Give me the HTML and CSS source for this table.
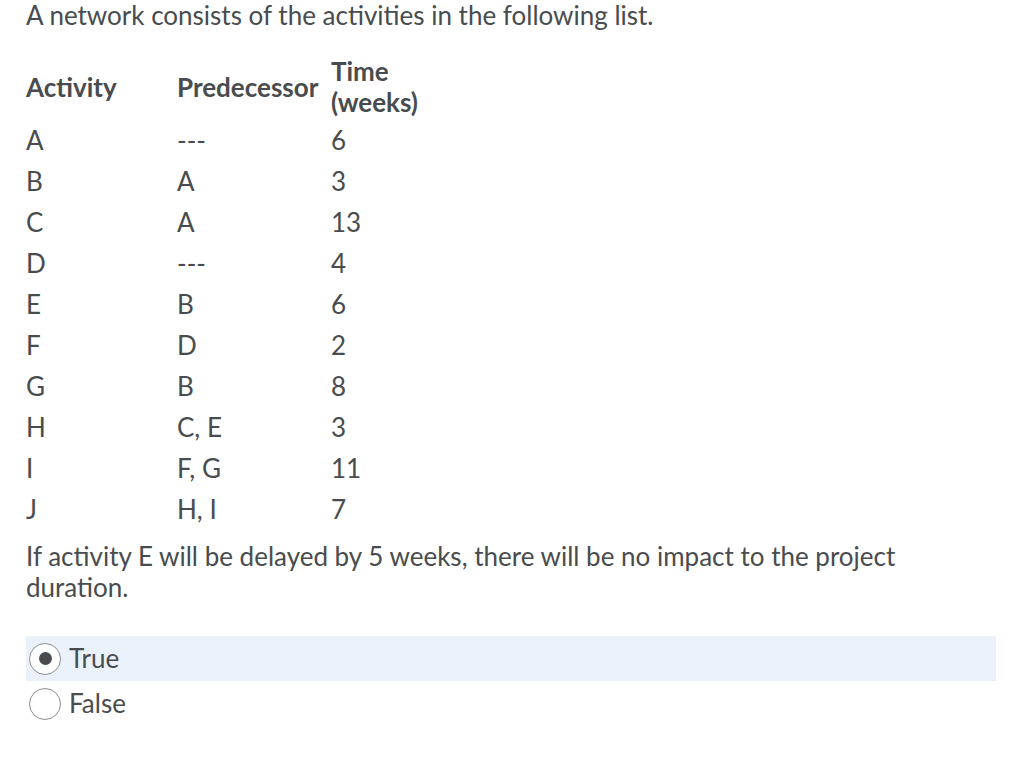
FILE: index.html
```html
<!DOCTYPE html>
<html lang="en">
<head>
<meta charset="utf-8">
<title>Question</title>
<link rel="stylesheet" href="styles.css">
</head>
<body>
<div class="question">
  <p class="intro">A network consists of the activities in the following list.</p>
  <table class="activities">
    <thead>
      <tr>
        <th class="col-act">Activity</th>
        <th class="col-pred">Predecessor</th>
        <th class="col-time">Time (weeks)</th>
      </tr>
    </thead>
    <tbody>
      <tr><td>A</td><td>---</td><td>6</td></tr>
      <tr><td>B</td><td>A</td><td>3</td></tr>
      <tr><td>C</td><td>A</td><td>13</td></tr>
      <tr><td>D</td><td>---</td><td>4</td></tr>
      <tr><td>E</td><td>B</td><td>6</td></tr>
      <tr><td>F</td><td>D</td><td>2</td></tr>
      <tr><td>G</td><td>B</td><td>8</td></tr>
      <tr><td>H</td><td>C, E</td><td>3</td></tr>
      <tr><td>I</td><td>F, G</td><td>11</td></tr>
      <tr><td>J</td><td>H, I</td><td>7</td></tr>
    </tbody>
  </table>
  <p class="statement">If activity E will be delayed by 5 weeks, there will be no impact to the project duration.</p>
  <div class="choices">
    <label class="choice selected">
      <span class="radio checked"><span class="dot"></span></span>
      <span class="choice-text">True</span>
    </label>
    <label class="choice">
      <span class="radio"></span>
      <span class="choice-text">False</span>
    </label>
  </div>
</div>
</body>
</html>
```

FILE: styles.css
```css
html, body {
  margin: 0;
  padding: 0;
  background: #ffffff;
}

body {
  font-family: Lato, "Open Sans", sans-serif;
  font-size: 26px;
  line-height: 31px;
  color: #494c4e;
}

.question {
  padding: 0 28px 0 26px;
}

.intro {
  margin: 0;
}

.activities {
  border-collapse: collapse;
  margin-top: 21px;
}

.activities th,
.activities td {
  padding: 5px 0;
  text-align: left;
  vertical-align: middle;
}

.activities th {
  font-weight: 700;
  padding-top: 4px;
  padding-bottom: 2px;
}

.col-act { width: 151px; }
.col-pred { width: 154px; }
.col-time { width: 100px; }

.statement {
  margin: 11px 0 0;
}

.choices {
  margin-top: 33px;
  display: flex;
  flex-direction: column;
}

.choice {
  display: flex;
  align-items: center;
  height: 45px;
  padding-left: 3px;
  gap: 8px;
}

.choice.selected {
  background: #eaf1fb;
}

.radio {
  width: 32px;
  height: 32px;
  border: 1px solid #8a8f92;
  border-radius: 50%;
  background: #ffffff;
  box-sizing: border-box;
  display: flex;
  align-items: center;
  justify-content: center;
}

.dot {
  width: 13px;
  height: 13px;
  border-radius: 50%;
  background: #494c4e;
}
```
